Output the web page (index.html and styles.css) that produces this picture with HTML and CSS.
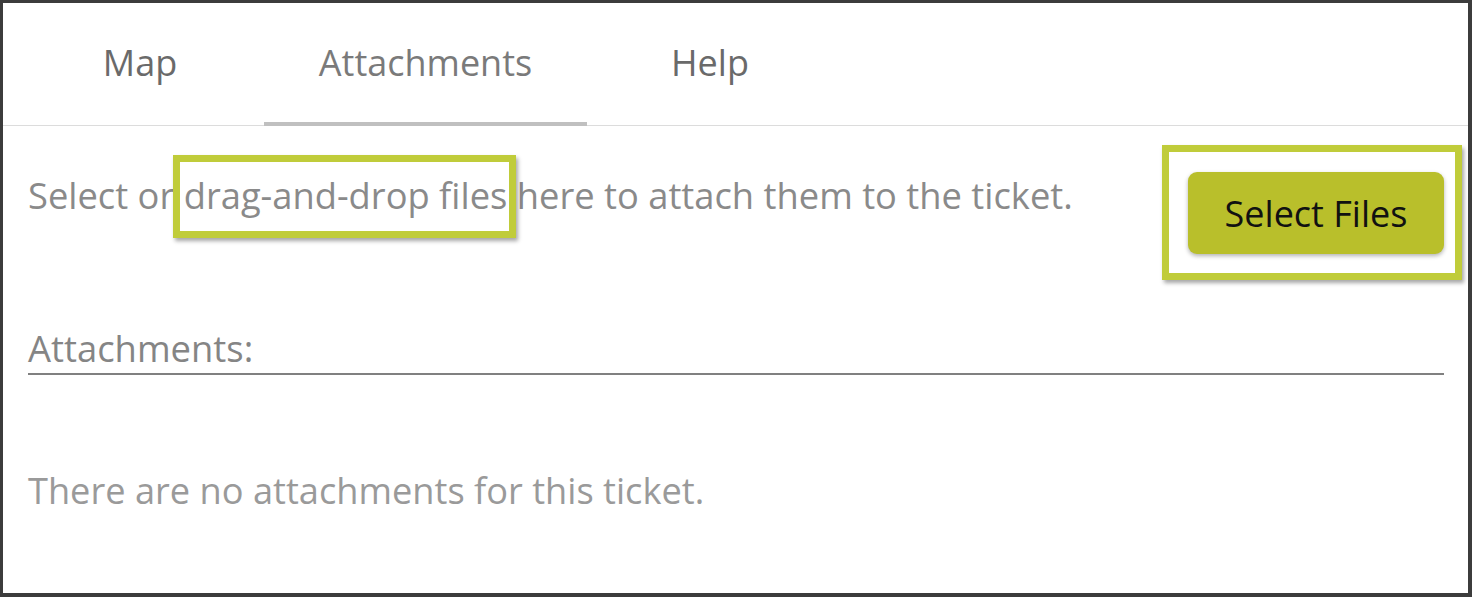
FILE: index.html
```html
<!DOCTYPE html>
<html>
<head>
<meta charset="utf-8">
<link rel="stylesheet" href="styles.css">
</head>
<body>
<div class="frame">
  <nav class="tabs">
    <div class="tab tab-map">Map</div>
    <div class="tab tab-attach active">Attachments</div>
    <div class="tab tab-help">Help</div>
  </nav>
  <main class="content">
    <div class="upload-row">
      <p class="hint">Select or <span class="mark">drag-and-drop files</span> here to attach them to the ticket.</p>
      <div class="btn-wrap">
        <button class="btn">Select Files</button>
      </div>
    </div>
    <h2 class="section-title">Attachments:</h2>
    <p class="empty">There are no attachments for this ticket.</p>
  </main>
</div>
</body>
</html>
```
FILE: styles.css
```css
* { box-sizing: border-box; }
html, body { margin: 0; padding: 0; background: #fff; }
body { font-family: "Open Sans", "Noto Sans", sans-serif; }

.frame {
  width: 1472px;
  height: 597px;
  border-style: solid;
  border-color: #3c3c3c;
  border-width: 3px 4px 4px 3px;
  background: #fff;
  overflow: hidden;
}

.tabs {
  display: flex;
  gap: 12px;
  height: 123px;
  padding-left: 25px;
  border-bottom: 1px solid #dcdcdc;
}
.tab {
  display: flex;
  align-items: center;
  justify-content: center;
  font-size: 36px;
  color: #6a6a6a;
  height: 122px;
  padding-bottom: 4px;
}
.tab-map { width: 224px; }
.tab-attach { width: 323px; color: #7a7a7a; }
.tab-help { width: 222px; }
.tab.active { border-bottom: 4px solid #c0c0c0; height: 123px; padding-bottom: 0; }

.content {
  padding: 0 24px 0 25px;
}

.upload-row {
  display: flex;
  justify-content: space-between;
  align-items: flex-start;
  padding-top: 45px;
}
.hint {
  margin: 0;
  font-size: 36.3px;
  line-height: 49px;
  color: #8a8a8a;
}
.mark {
  position: relative;
}
.mark::after {
  content: "";
  position: absolute;
  left: -11px;
  right: -9px;
  top: -15px;
  bottom: -18px;
  border: 7px solid #c0cc3a;
  box-shadow: 2px 3px 4px rgba(0,0,0,0.35);
}

.btn-wrap {
  position: relative;
  margin-top: 1px;
}
.btn-wrap::after {
  content: "";
  position: absolute;
  left: -26px;
  right: -18px;
  top: -27px;
  bottom: -26px;
  border: 7px solid #c0cc3a;
  box-shadow: 2px 3px 4px rgba(0,0,0,0.35);
  pointer-events: none;
}
.btn {
  display: block;
  width: 256px;
  height: 82px;
  padding: 0;
  background: #b9bf2b;
  color: #111;
  border: none;
  border-radius: 9px;
  font-family: "Open Sans", "Noto Sans", sans-serif;
  font-size: 36px;
  box-shadow: 0 2px 4px rgba(0,0,0,0.3);
}

.section-title {
  margin: 70px 0 0;
  font-weight: normal;
  font-size: 36.4px;
  line-height: 49px;
  color: #858585;
  border-bottom: 2px solid #808080;
  padding-bottom: 0;
}

.empty {
  margin: 91px 0 0;
  font-size: 36.2px;
  line-height: 49px;
  color: #9a9a9a;
}
```
